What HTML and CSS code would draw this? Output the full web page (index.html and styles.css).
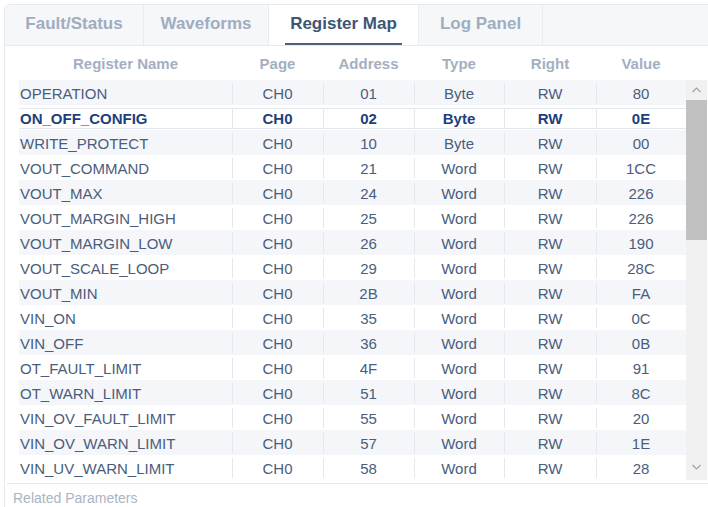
FILE: index.html
```html
<!DOCTYPE html>
<html lang="en">
<head>
  <meta charset="UTF-8" />
  <title>Register Map</title>
  <link rel="stylesheet" href="styles.css">
</head>
<body>
  <div class="panel">
    <nav class="tabs">
      <div class="tab"><span>Fault/Status</span></div>
      <div class="tab"><span>Waveforms</span></div>
      <div class="tab active"><span>Register Map</span></div>
      <div class="tab"><span>Log Panel</span></div>
      <div class="tab-fill"></div>
    </nav>

    <div class="content">
      <div class="thead">
        <span>Register Name</span>
        <span>Page</span>
        <span>Address</span>
        <span>Type</span>
        <span>Right</span>
        <span>Value</span>
      </div>

      <div class="tbody">
        <div class="rows">
          <div class="row"><span>OPERATION</span><span>CH0</span><span>01</span><span>Byte</span><span>RW</span><span>80</span></div>
          <div class="row selected"><span>ON_OFF_CONFIG</span><span>CH0</span><span>02</span><span>Byte</span><span>RW</span><span>0E</span></div>
          <div class="row"><span>WRITE_PROTECT</span><span>CH0</span><span>10</span><span>Byte</span><span>RW</span><span>00</span></div>
          <div class="row"><span>VOUT_COMMAND</span><span>CH0</span><span>21</span><span>Word</span><span>RW</span><span>1CC</span></div>
          <div class="row"><span>VOUT_MAX</span><span>CH0</span><span>24</span><span>Word</span><span>RW</span><span>226</span></div>
          <div class="row"><span>VOUT_MARGIN_HIGH</span><span>CH0</span><span>25</span><span>Word</span><span>RW</span><span>226</span></div>
          <div class="row"><span>VOUT_MARGIN_LOW</span><span>CH0</span><span>26</span><span>Word</span><span>RW</span><span>190</span></div>
          <div class="row"><span>VOUT_SCALE_LOOP</span><span>CH0</span><span>29</span><span>Word</span><span>RW</span><span>28C</span></div>
          <div class="row"><span>VOUT_MIN</span><span>CH0</span><span>2B</span><span>Word</span><span>RW</span><span>FA</span></div>
          <div class="row"><span>VIN_ON</span><span>CH0</span><span>35</span><span>Word</span><span>RW</span><span>0C</span></div>
          <div class="row"><span>VIN_OFF</span><span>CH0</span><span>36</span><span>Word</span><span>RW</span><span>0B</span></div>
          <div class="row"><span>OT_FAULT_LIMIT</span><span>CH0</span><span>4F</span><span>Word</span><span>RW</span><span>91</span></div>
          <div class="row"><span>OT_WARN_LIMIT</span><span>CH0</span><span>51</span><span>Word</span><span>RW</span><span>8C</span></div>
          <div class="row"><span>VIN_OV_FAULT_LIMIT</span><span>CH0</span><span>55</span><span>Word</span><span>RW</span><span>20</span></div>
          <div class="row"><span>VIN_OV_WARN_LIMIT</span><span>CH0</span><span>57</span><span>Word</span><span>RW</span><span>1E</span></div>
          <div class="row"><span>VIN_UV_WARN_LIMIT</span><span>CH0</span><span>58</span><span>Word</span><span>RW</span><span>28</span></div>
        </div>

        <div class="scrollbar">
          <div class="sb-btn">
            <svg width="9" height="6" viewBox="0 0 9 6"><path d="M0.5 5 L4.5 1 L8.5 5" fill="none" stroke="#a3a3a3" stroke-width="1.2"/></svg>
          </div>
          <div class="sb-thumb"></div>
          <div class="sb-track"></div>
          <div class="sb-btn">
            <svg width="9" height="6" viewBox="0 0 9 6"><path d="M0.5 1 L4.5 5 L8.5 1" fill="none" stroke="#a3a3a3" stroke-width="1.2"/></svg>
          </div>
        </div>
      </div>
    </div>

    <div class="related">Related Parameters</div>
  </div>
</body>
</html>
```

FILE: styles.css
```css
/* Reset */
* {
  box-sizing: border-box;
  margin: 0;
  padding: 0;
}
body {
  font-family: "Liberation Sans", Arial, sans-serif;
  background: #fff;
  color: #4a5d7d;
  height: 507px;
  overflow: hidden;
}

/* Panel */
.panel {
  margin: 4px 0 0 4px;
  width: 720px;
  border: 1px solid #e6e9ee;
  border-radius: 6px;
}

/* Tabs */
.tabs {
  display: grid;
  grid-template-columns: 139px 125px 150px 124px 1fr;
  height: 41px;
  background: #f6f7f9;
  border-bottom: 1px solid #e6e9ee;
  border-radius: 6px 6px 0 0;
}
.tab {
  display: flex;
  justify-content: center;
  border-right: 1px solid #e8ebf0;
  font-size: 17px;
  font-weight: bold;
  color: #a0adc0;
}
.tab span {
  display: flex;
  align-items: center;
  padding: 0 5px;
  border-bottom: 2px solid transparent;
}
.tab.active {
  background: #fff;
  color: #3e5576;
}
.tab.active span {
  border-bottom-color: #4a6285;
}

/* Table */
.content {
  padding-left: 14px;
}
.thead,
.row {
  display: grid;
  grid-template-columns: 213px 91px 91px 90px 92px 90px;
  width: 667px;
}
.thead {
  height: 34px;
  align-items: center;
  text-align: center;
  font-size: 15px;
  font-weight: bold;
  color: #a3afc1;
}
.tbody {
  display: flex;
  height: 400px;
}
.row {
  height: 25px;
  font-size: 15px;
}
.row:nth-child(odd) {
  background: #f4f6f9;
}
.row span {
  padding-top: 2px;
  line-height: 23px;
  text-align: center;
  white-space: nowrap;
  background: linear-gradient(#e4e8ee, #e4e8ee) left 3px / 1px 20px no-repeat;
}
.row span:first-child {
  text-align: left;
  padding-left: 1px;
  background: none;
}
.row.selected {
  font-weight: bold;
  color: #1d3f7c;
  background:
    linear-gradient(#e3e8ef, #e3e8ef) 0 3px / 100% 1px no-repeat,
    linear-gradient(#e3e8ef, #e3e8ef) 0 23px / 100% 1px no-repeat,
    #fff;
}

/* Scrollbar */
.scrollbar {
  width: 21px;
  display: flex;
  flex-direction: column;
  background: #f1f1f1;
  padding-bottom: 3px;
}
.sb-btn {
  height: 20px;
  display: flex;
  align-items: center;
  justify-content: center;
}
.sb-thumb {
  height: 140px;
  background: #c1c1c1;
}
.sb-track {
  flex-grow: 1;
}

/* Footer */
.related {
  margin: 3px 0 0 2px;
  border-top: 1px solid #e3e8ee;
  padding: 6px 0 0 6px;
  height: 40px;
  font-size: 14px;
  color: #a9b4c4;
}
```
